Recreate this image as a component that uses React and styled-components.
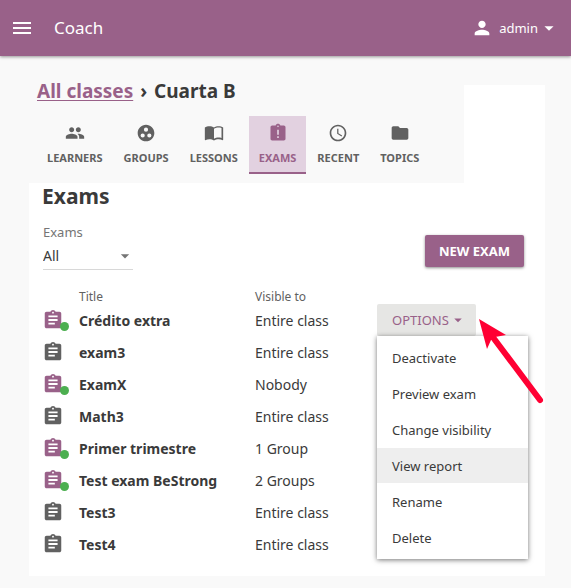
import React from "react";
import styled, { createGlobalStyle, css } from "styled-components";
import {
  MdMenu,
  MdPerson,
  MdArrowDropDown,
  MdPeople,
  MdGroupWork,
  MdAssignmentLate,
  MdAccessTime,
  MdFolder,
  MdAssignment,
} from "react-icons/md";

const colors = {
  brand: "#996189",
  brandLight: "#e2d1e0",
  text: "#3a3a3a",
  muted: "#616161",
  page: "#f9f9f9",
  green: "#4caf50",
};

const GlobalStyle = createGlobalStyle`
  *, *::before, *::after { box-sizing: border-box; }
  body {
    margin: 0;
    background: ${colors.page};
    color: ${colors.text};
    font-family: "Noto Sans", sans-serif;
    font-size: 14px;
  }
  button, select { font-family: inherit; }
`;

const AppBar = styled.header`
  display: flex;
  align-items: center;
  justify-content: space-between;
  height: 56px;
  padding: 0 11px 0 10px;
  background: ${colors.brand};
  color: #fff;
  box-shadow: 0 1px 3px rgba(0, 0, 0, 0.4);
`;

const BarGroup = styled.div`
  display: flex;
  align-items: center;
  gap: 20px;
`;

const BarButton = styled.button`
  display: flex;
  align-items: center;
  padding: 0;
  border: 0;
  background: none;
  color: inherit;
  font-size: 13px;
  svg { display: block; }
`;

const UserName = styled.span`
  margin: 0 0 0 6px;
`;

const AppTitle = styled.span`
  font-size: 17px;
  line-height: 24px;
`;

const Content = styled.main`
  margin: 29px 26px 12px 29px;
  padding-bottom: 16px;
  background: #fff;
`;

const ClassHeader = styled.div`
  width: fit-content;
  padding: 0 35px 9px 8px;
  background: ${colors.page};
`;

const Breadcrumbs = styled.h1`
  margin: 0;
  padding-bottom: 19px;
  font-size: 19px;
  line-height: 12px;
  a { color: ${colors.brand}; text-underline-offset: 2px; text-decoration-thickness: 1px; }
`;

const Separator = styled.span`
  margin: 0 2px;
`;

const Tabs = styled.nav`
  display: flex;
  gap: 1px;
`;

const Tab = styled.a`
  display: flex;
  flex-direction: column;
  align-items: center;
  gap: 7px;
  height: 58px;
  padding: 7px 10px 0;
  border-bottom: 2px solid transparent;
  color: ${colors.muted};
  font-size: 11px;
  font-weight: 700;
  line-height: 16px;
  text-decoration: none;
  text-transform: uppercase;
  ${(p) =>
    p.$active &&
    css`
      background: ${colors.brandLight};
      border-color: ${colors.brand};
      color: ${colors.brand};
    `}
`;

const Section = styled.section`
  padding: 0 21px 0 13px;
`;

const SectionTitle = styled.h2`
  margin: 0;
  font-size: 21px;
  line-height: 26px;
`;

const Toolbar = styled.div`
  display: flex;
  align-items: flex-end;
  justify-content: space-between;
  padding-top: 13px;
`;

const Filter = styled.div`
  display: flex;
  flex-direction: column;
  width: 90px;
  margin-left: 1px;
  label { color: #757575; font-size: 13px; line-height: 20px; }
`;

const SelectBox = styled.div`
  display: grid;
  align-items: center;
  border-bottom: 1px solid #d8d8d8;
  > * { grid-area: 1 / 1; }
  svg { justify-self: end; margin-right: -2px; pointer-events: none; color: #757575; }
`;

const Select = styled.select`
  height: 27px;
  padding: 0;
  border: 0;
  appearance: none;
  background: transparent;
  color: ${colors.text};
  font-size: 14px;
`;

const NewExamButton = styled.button`
  height: 32px;
  margin-bottom: 3px;
  padding: 0 14px;
  border: 0;
  border-radius: 2px;
  background: ${colors.brand};
  color: #fff;
  font-size: 13px;
  font-weight: 700;
  text-transform: uppercase;
  box-shadow: 0 1px 3px rgba(0, 0, 0, 0.45);
`;

const ExamTable = styled.table`
  width: 100%;
  margin-top: 20px;
  border-collapse: collapse;
  table-layout: fixed;
  th, td { padding: 0; text-align: left; }
  thead th { color: ${colors.muted}; font-size: 12px; font-weight: 400; line-height: 14px; }
  tbody th { font-weight: 700; }
  tbody tr { height: 32px; }
`;

const Col = styled.col`
  width: ${(p) => p.$width};
`;

const ExamIcon = styled.span`
  position: relative;
  display: flex;
  width: 26px;
  color: ${(p) => (p.$active ? colors.brand : colors.muted)};
`;

const ActiveDot = styled.span`
  position: absolute;
  right: -1px;
  bottom: 0;
  width: 9px;
  height: 9px;
  border-radius: 50%;
  background: ${colors.green};
`;

const MenuAnchor = styled.div`
  position: relative;
  width: fit-content;
`;

const OptionsButton = styled.button`
  display: flex;
  align-items: center;
  height: 32px;
  padding: 0 9px 0 15px;
  border: 0;
  border-radius: 2px;
  background: #e6e6e4;
  color: ${colors.brand};
  font-size: 13px;
  text-transform: uppercase;
`;

const Menu = styled.div`
  position: absolute;
  top: 100%;
  left: 0;
  z-index: 1;
  width: 151px;
  padding: 4px 0 3px;
  background: #fff;
  box-shadow: 0 1px 5px rgba(0, 0, 0, 0.55);
`;

const MenuItem = styled.button`
  display: block;
  width: 100%;
  height: 35px;
  margin-bottom: 1px;
  padding: 0 15px;
  border: 0;
  background: ${(p) => (p.$highlighted ? "#eeeeee" : "transparent")};
  color: ${colors.text};
  font-size: 13px;
  text-align: left;
`;

const Pointer = styled.svg`
  position: absolute;
  top: 15px;
  left: 102px;
  z-index: 2;
  width: 66px;
  height: 86px;
  pointer-events: none;
`;

const BookIcon = () => (
  <svg width="20" height="20" viewBox="0 0 24 24" fill="currentColor" aria-hidden="true">
    <path
      fillRule="evenodd"
      d="M12 5.5C10.5 4.4 8.5 4 6.5 4S2.5 4.4 1 5.5v14.6c0 .3.25.5.5.5C3.1 19.9 5 19.5 6.5 19.5c2 0 4 .4 5.5 1.500 1.400-.9 3.800-1.500 5.500-1.500s3.400.4 5 1.100c.25 0 .5-.2.5-.5V5.500C21.500 4.400 19.500 4 17.500 4S13.500 4.400 12 5.500zM21 18c-1.100-.4-2.300-.5-3.500-.5-1.700 0-4.200.6-5.500 1.500V7c1.400-.9 3.800-1.500 5.500-1.500 1.200 0 2.400.1 3.500.5z"
    />
  </svg>
);

const tabs = [
  { label: "Learners", Icon: MdPeople },
  { label: "Groups", Icon: MdGroupWork },
  { label: "Lessons", Icon: BookIcon },
  { label: "Exams", Icon: MdAssignmentLate, active: true },
  { label: "Recent", Icon: MdAccessTime },
  { label: "Topics", Icon: MdFolder },
];

const exams = [
  { title: "Crédito extra", visible: "Entire class", active: true, menuOpen: true },
  { title: "exam3", visible: "Entire class" },
  { title: "ExamX", visible: "Nobody", active: true },
  { title: "Math3", visible: "Entire class" },
  { title: "Primer trimestre", visible: "1 Group", active: true },
  { title: "Test exam BeStrong", visible: "2 Groups", active: true },
  { title: "Test3", visible: "Entire class" },
  { title: "Test4", visible: "Entire class" },
];

const menuItems = ["Deactivate", "Preview exam", "Change visibility", "View report", "Rename", "Delete"];

function OptionsMenu() {
  return (
    <MenuAnchor>
      <OptionsButton type="button" aria-haspopup="menu" aria-expanded="true">
        Options <MdArrowDropDown size={18} />
      </OptionsButton>
      <Menu role="menu">
        {menuItems.map((item) => (
          <MenuItem key={item} type="button" role="menuitem" $highlighted={item === "View report"}>
            {item}
          </MenuItem>
        ))}
      </Menu>
      <Pointer viewBox="0 0 66 86" aria-hidden="true">
        <path d="M13 17L61 81" stroke="#ff0033" strokeWidth="6" strokeLinecap="round" />
        <path d="M0 0L27 16L16 18L12 21L8 30Z" fill="#ff0033" />
      </Pointer>
    </MenuAnchor>
  );
}

export default function App() {
  return (
    <>
      <GlobalStyle />
      <AppBar>
        <BarGroup>
          <BarButton type="button" aria-label="Open menu">
            <MdMenu size={24} />
          </BarButton>
          <AppTitle>Coach</AppTitle>
        </BarGroup>
        <BarButton type="button">
          <MdPerson size={22} />
          <UserName>admin</UserName>
          <MdArrowDropDown size={22} />
        </BarButton>
      </AppBar>
      <Content>
        <ClassHeader>
          <Breadcrumbs>
            <a href="#classes">All classes</a> <Separator>›</Separator> Cuarta B
          </Breadcrumbs>
          <Tabs>
            {tabs.map(({ label, Icon, active }) => (
              <Tab key={label} href={`#${label.toLowerCase()}`} $active={active}>
                <Icon size={20} />
                {label}
              </Tab>
            ))}
          </Tabs>
        </ClassHeader>
        <Section>
          <SectionTitle>Exams</SectionTitle>
          <Toolbar>
            <Filter>
              <label htmlFor="exam-filter">Exams</label>
              <SelectBox>
                <Select id="exam-filter" defaultValue="All">
                  <option>All</option>
                </Select>
                <MdArrowDropDown size={20} />
              </SelectBox>
            </Filter>
            <NewExamButton type="button">New exam</NewExamButton>
          </Toolbar>
          <ExamTable>
            <colgroup>
              <Col $width="37px" />
              <Col $width="176px" />
              <Col $width="122px" />
              <Col $width="auto" />
            </colgroup>
            <thead>
              <tr>
                <td />
                <th scope="col">Title</th>
                <th scope="col">Visible to</th>
                <td />
              </tr>
            </thead>
            <tbody>
              {exams.map((exam) => (
                <tr key={exam.title}>
                  <td>
                    <ExamIcon $active={exam.active}>
                      <MdAssignment size={22} />
                      {exam.active && <ActiveDot />}
                    </ExamIcon>
                  </td>
                  <th scope="row">{exam.title}</th>
                  <td>{exam.visible}</td>
                  <td>{exam.menuOpen && <OptionsMenu />}</td>
                </tr>
              ))}
            </tbody>
          </ExamTable>
        </Section>
      </Content>
    </>
  );
}
